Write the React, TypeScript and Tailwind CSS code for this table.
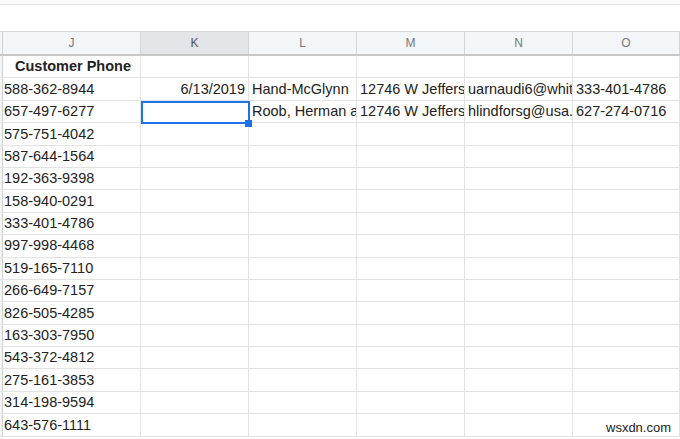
import React from "react";

const rows: string[][] = [
  ["Customer Phone", "", "", "", "", ""],
  ["588-362-8944", "6/13/2019", "Hand-McGlynn", "12746 W Jeffers", "uarnaudi6@whit", "333-401-4786"],
  ["657-497-6277", "", "Roob, Herman a", "12746 W Jeffers", "hlindforsg@usa.", "627-274-0716"],
  ["575-751-4042", "", "", "", "", ""],
  ["587-644-1564", "", "", "", "", ""],
  ["192-363-9398", "", "", "", "", ""],
  ["158-940-0291", "", "", "", "", ""],
  ["333-401-4786", "", "", "", "", ""],
  ["997-998-4468", "", "", "", "", ""],
  ["519-165-7110", "", "", "", "", ""],
  ["266-649-7157", "", "", "", "", ""],
  ["826-505-4285", "", "", "", "", ""],
  ["163-303-7950", "", "", "", "", ""],
  ["543-372-4812", "", "", "", "", ""],
  ["275-161-3853", "", "", "", "", ""],
  ["314-198-9594", "", "", "", "", ""],
  ["643-576-1111", "", "", "", "", ""],
];

const cols = ["J", "K", "L", "M", "N", "O"];
const widths = ["w-[138px]", "w-[108px]", "w-[108px]", "w-[108px]", "w-[108px]", "flex-1"];

export default function App() {
  return (
    <div
      className="relative w-[680px] h-[439px] overflow-hidden bg-white text-[#222]"
      style={{ fontFamily: "'Liberation Sans', Arial, sans-serif" }}
    >
      {/* top toolbar remnant */}
      <div className="h-[4px] bg-[#fafafa]" />
      <div className="h-[27px] border-t border-[#e3e3e3] bg-white" />

      {/* column header row */}
      <div className="flex h-[25px] border-t border-[#d6d6d6] border-b-2 border-b-[#c8c8c8] bg-[#f3f6f9]">
        <div className="w-[3px] border-r border-[#d0d0d0]" />
        {cols.map((c, i) => (
          <div
            key={c}
            className={`${widths[i]} shrink-0 flex items-center justify-center border-r border-[#d6d6d6] text-[12px] ${
              c === "K" ? "bg-[#e3e5e8] text-[#555]" : "text-[#777]"
            }`}
          >
            {c}
          </div>
        ))}
      </div>

      {/* data rows */}
      {rows.map((r, ri) => (
        <div key={ri} className="flex h-[22.4px] border-b border-[#e2e2e2]">
          <div className="w-[3px] border-r border-[#d0d0d0] bg-[#f3f6f9]" />
          {r.map((v, ci) => {
            const isHeader = ri === 0 && ci === 0;
            const right = ci === 1;
            return (
              <div
                key={ci}
                className={`${widths[ci]} shrink-0 flex items-center overflow-hidden whitespace-nowrap border-r border-[#e2e2e2] text-[14.5px] pt-[1px] ${
                  isHeader
                    ? "justify-center font-bold pl-[3px]"
                    : right
                    ? "justify-end pr-[3px]"
                    : ci === 0
                    ? "justify-start pl-[1px]"
                    : "justify-start pl-[3px]"
                }`}
              >
                {v}
              </div>
            );
          })}
        </div>
      ))}

      {/* selected cell */}
      <div className="absolute left-[141px] top-[101px] w-[109px] h-[23px] border-2 border-[#1a73e8]" />
      <div className="absolute left-[245px] top-[120px] w-[7px] h-[7px] bg-[#1a73e8]" />

      {/* watermark */}
      <div className="absolute left-[604px] top-[420px] bg-white px-[2px] text-[13px] leading-[16px] text-[#222]">
        wsxdn.com
      </div>
    </div>
  );
}
